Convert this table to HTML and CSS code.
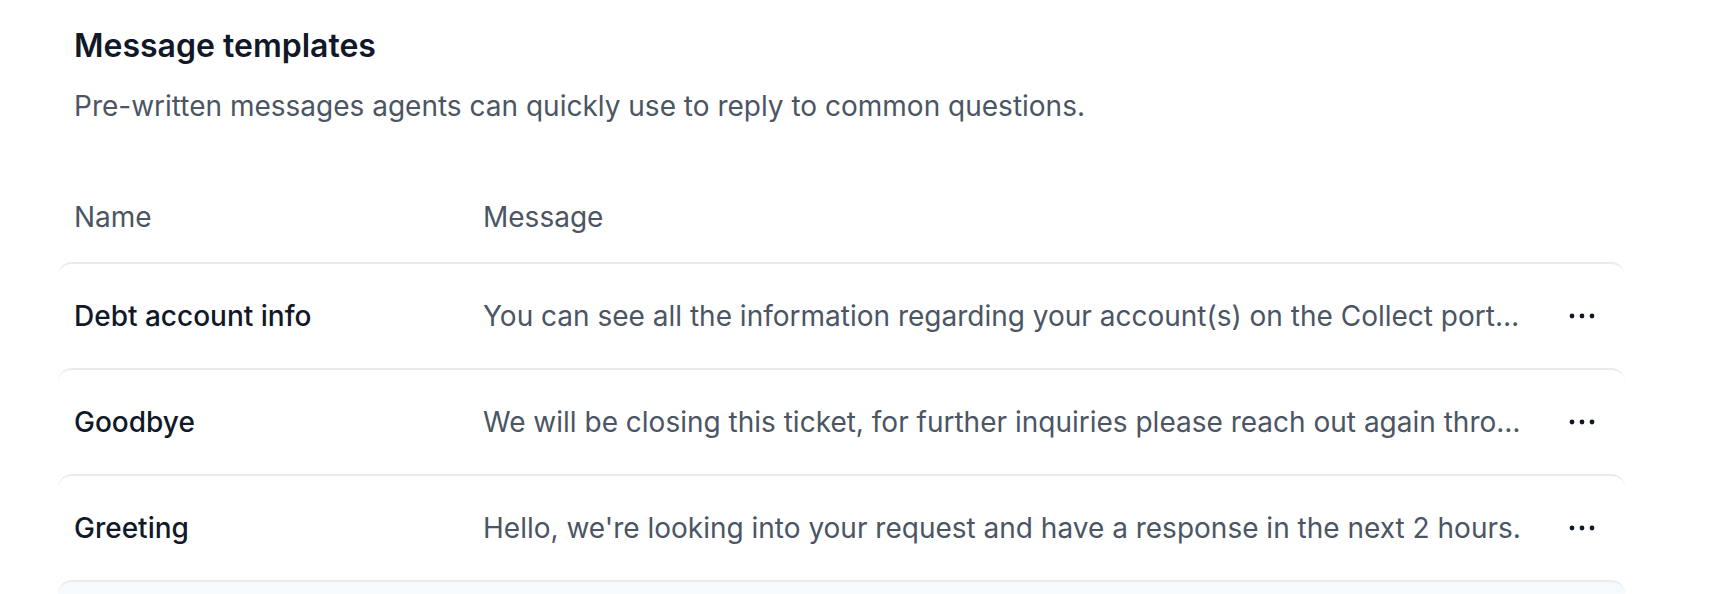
FILE: index.html
```html
<html>
<head>
<link rel="stylesheet" href="styles.css">
</head>
<body>
<div class="page">
  <h1 class="title">Message templates</h1>
  <p class="subtitle">Pre-written messages agents can quickly use to reply to common questions.</p>

  <div class="templates">
    <div class="templates-head">
      <div>Name</div>
      <div>Message</div>
      <div></div>
    </div>

    <div class="template-row">
      <div class="template-name">Debt account info</div>
      <div class="template-message">You can see all the information regarding your account(s) on the Collect portal at any time, including balances and payment history.</div>
      <button class="more-btn" aria-label="More">
        <svg width="26" height="6" viewBox="0 0 26 6"><circle cx="3" cy="3" r="2.4"/><circle cx="13" cy="3" r="2.4"/><circle cx="23" cy="3" r="2.4"/></svg>
      </button>
    </div>

    <div class="template-row">
      <div class="template-name">Goodbye</div>
      <div class="template-message">We will be closing this ticket, for further inquiries please reach out again through the help center.</div>
      <button class="more-btn" aria-label="More">
        <svg width="26" height="6" viewBox="0 0 26 6"><circle cx="3" cy="3" r="2.4"/><circle cx="13" cy="3" r="2.4"/><circle cx="23" cy="3" r="2.4"/></svg>
      </button>
    </div>

    <div class="template-row">
      <div class="template-name">Greeting</div>
      <div class="template-message">Hello, we're looking into your request and have a response in the next 2 hours.</div>
      <button class="more-btn" aria-label="More">
        <svg width="26" height="6" viewBox="0 0 26 6"><circle cx="3" cy="3" r="2.4"/><circle cx="13" cy="3" r="2.4"/><circle cx="23" cy="3" r="2.4"/></svg>
      </button>
    </div>

    <div class="template-row is-hover">
      <div class="template-name">Payment plan</div>
      <div class="template-message">You can set up a payment plan directly from the Collect portal under the Payments tab.</div>
      <button class="more-btn" aria-label="More">
        <svg width="26" height="6" viewBox="0 0 26 6"><circle cx="3" cy="3" r="2.4"/><circle cx="13" cy="3" r="2.4"/><circle cx="23" cy="3" r="2.4"/></svg>
      </button>
    </div>
  </div>
</div>
</body>
</html>
```

FILE: styles.css
```css
* {
  box-sizing: border-box;
  margin: 0;
  padding: 0;
}

body {
  font-family: Inter, "Noto Sans", sans-serif;
  background: #ffffff;
  color: #111827;
}

.page {
  padding: 28px 111px 0 74px;
}

.title {
  font-size: 32px;
  line-height: 36px;
  font-weight: 600;
  color: #111827;
}

.subtitle {
  margin-top: 24px;
  font-size: 28px;
  line-height: 36px;
  color: #4b5563;
}

.templates {
  margin-top: 75px;
}

.templates-head,
.template-row {
  display: grid;
  grid-template-columns: 409px 1fr 54px;
  align-items: center;
  font-size: 28px;
  line-height: 36px;
}

.templates-head {
  padding-bottom: 27px;
  color: #4b5563;
}

.template-row {
  margin: 0 -16px;
  padding: 34px 16px 34px 16px;
  border-top: 2px solid #ebebed;
  border-radius: 14px 14px 0 0;
  background: #ffffff;
}

.template-row.is-hover {
  background: #f7fafc;
}

.template-name {
  font-weight: 500;
  color: #111827;
}

.template-message {
  margin-right: 26px;
  color: #4b5563;
  white-space: nowrap;
  overflow: hidden;
  text-overflow: ellipsis;
}

.more-btn {
  display: flex;
  justify-content: center;
  align-items: center;
  height: 36px;
  border: none;
  background: none;
  cursor: pointer;
  fill: #111827;
}
```
